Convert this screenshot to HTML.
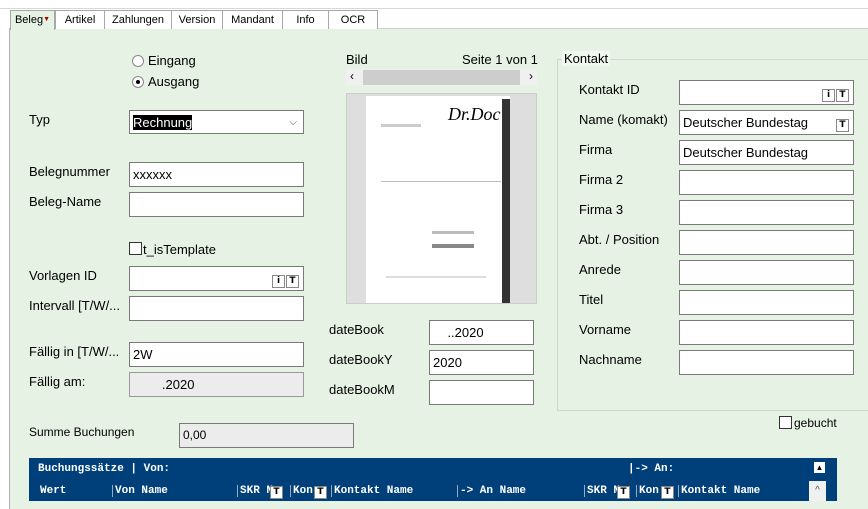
<!DOCTYPE html>
<html><head><meta charset="utf-8"><style>
body{margin:0;width:868px;height:501px;overflow:hidden;background:#fff;font-family:"Liberation Sans",sans-serif;font-size:13px;color:#000;position:relative}
.a{position:absolute}
.panel{position:absolute;left:9px;top:28px;width:870px;height:480px;background:#e6f3e4;border-left:1px solid #b0b0b0;border-top:1px solid #d0d0d0}
.tab{position:absolute;top:10px;height:18px;border:1px solid #a8a8a8;border-bottom:none;background:#fff;font-size:11px;text-align:center;line-height:18px}
.in{position:absolute;background:#fff;border:1px solid #7a7a7a;box-sizing:border-box;height:25px;padding-left:3px;line-height:23px;font-size:13px}
.lb{position:absolute;font-size:13px}
.btn{position:absolute;width:11px;height:11px;border:1px solid #888;background:#fff;font-size:9px;font-weight:bold;line-height:11px;text-align:center;font-family:"DejaVu Sans",sans-serif}
.mono{font-family:"Liberation Mono",monospace;font-size:11px;color:#fff;font-weight:bold}
</style></head><body>
<div class="a" style="left:0;top:8px;width:868px;height:1px;background:#d8d8d8"></div>
<div class="panel"></div>
<div class="tab" style="left:10px;width:43px;background:#e6f3e4;height:19px">Beleg<span style="color:#a00;font-size:7px;vertical-align:top">▼</span></div>
<div class="tab" style="left:55px;width:48px">Artikel</div>
<div class="tab" style="left:104px;width:66px">Zahlungen</div>
<div class="tab" style="left:171px;width:50px">Version</div>
<div class="tab" style="left:222px;width:59px">Mandant</div>
<div class="tab" style="left:282px;width:45px">Info</div>
<div class="tab" style="left:328px;width:48px">OCR</div>

<div class="a" style="left:132px;top:55px;width:10px;height:10px;border-radius:50%;border:1px solid #888;background:#fff"></div>
<div class="lb" style="left:148px;top:53px">Eingang</div>
<div class="a" style="left:132px;top:76px;width:10px;height:10px;border-radius:50%;border:1px solid #888;background:#fff"><div class="a" style="left:3px;top:3px;width:4px;height:4px;border-radius:50%;background:#000"></div></div>
<div class="lb" style="left:148px;top:74px">Ausgang</div>

<div class="lb" style="left:29px;top:112px">Typ</div>
<div class="in" style="left:129px;top:110px;width:175px;height:24px"><span style="background:#000;color:#fff">Rechnung</span><span class="a" style="right:6px;top:0;font-size:10px;color:#444">⌵</span></div>
<div class="lb" style="left:29px;top:164px">Belegnummer</div>
<div class="in" style="left:129px;top:162px;width:175px">xxxxxx</div>
<div class="lb" style="left:29px;top:194px">Beleg-Name</div>
<div class="in" style="left:129px;top:192px;width:175px"></div>
<div class="a" style="left:129px;top:242px;width:11px;height:11px;border:1px solid #333;background:#fff"></div>
<div class="lb" style="left:143px;top:242px">t_isTemplate</div>
<div class="lb" style="left:29px;top:268px">Vorlagen ID</div>
<div class="in" style="left:129px;top:266px;width:175px"><div class="btn" style="left:142px;top:8px">i</div><div class="btn" style="left:156px;top:8px">T</div></div>
<div class="lb" style="left:29px;top:298px">Intervall [T/W/...</div>
<div class="in" style="left:129px;top:296px;width:175px"></div>
<div class="lb" style="left:29px;top:344px">Fällig in [T/W/...</div>
<div class="in" style="left:129px;top:342px;width:175px">2W</div>
<div class="lb" style="left:29px;top:374px">Fällig am:</div>
<div class="in" style="left:129px;top:372px;width:175px;background:#ececec;border-color:#999">&nbsp; &nbsp; &nbsp; &nbsp; .2020</div>

<div class="lb" style="left:346px;top:52px">Bild</div>
<div class="lb" style="left:462px;top:52px">Seite 1 von 1</div>
<div class="a" style="left:346px;top:69px;width:191px;height:17px;background:#f0f0f0"><div class="a" style="left:17px;top:1px;width:157px;height:15px;background:#cdcdcd"></div><span class="a" style="left:4px;top:0;font-size:12px">‹</span><span class="a" style="right:4px;top:0;font-size:12px">›</span></div>
<div class="a" style="left:346px;top:93px;width:191px;height:211px;background:#dedede;border:1px solid #ccc;box-sizing:border-box">
<div class="a" style="left:19px;top:2px;width:144px;height:207px;background:#fff">
<div class="a" style="left:82px;top:8px;font-family:'Liberation Serif',serif;font-style:italic;font-size:18px">Dr.Doc</div>
<div class="a" style="left:136px;top:3px;width:8px;height:204px;background:#333"></div>
<div class="a" style="left:15px;top:28px;width:40px;height:3px;background:#ccc"></div>
<div class="a" style="left:15px;top:85px;width:120px;height:1px;background:#bbb"></div>
<div class="a" style="left:66px;top:135px;width:42px;height:3px;background:#bbb"></div>
<div class="a" style="left:66px;top:148px;width:42px;height:4px;background:#888"></div>
<div class="a" style="left:20px;top:180px;width:100px;height:2px;background:#ddd"></div>
</div></div>

<div class="lb" style="left:329px;top:322px">dateBook</div>
<div class="in" style="left:429px;top:320px;width:105px">&nbsp; &nbsp; ..2020</div>
<div class="lb" style="left:329px;top:352px">dateBookY</div>
<div class="in" style="left:429px;top:350px;width:105px">2020</div>
<div class="lb" style="left:329px;top:382px">dateBookM</div>
<div class="in" style="left:429px;top:380px;width:105px"></div>

<div class="a" style="left:557px;top:59px;width:320px;height:352px;border:1px solid #cfd8cf;box-sizing:border-box"></div>
<div class="lb" style="left:562px;top:51px;background:#f0f8ef;padding:0 2px">Kontakt</div>
<div class="lb" style="left:579px;top:82px">Kontakt ID</div>
<div class="in" style="left:679px;top:80px;width:175px"><div class="btn" style="left:142px;top:8px">i</div><div class="btn" style="left:156px;top:8px">T</div></div>
<div class="lb" style="left:579px;top:112px">Name (komakt)</div>
<div class="in" style="left:679px;top:110px;width:175px">Deutscher Bundestag<div class="btn" style="left:156px;top:8px">T</div></div>
<div class="lb" style="left:579px;top:142px">Firma</div>
<div class="in" style="left:679px;top:140px;width:175px">Deutscher Bundestag</div>
<div class="lb" style="left:579px;top:172px">Firma 2</div><div class="in" style="left:679px;top:170px;width:175px"></div>
<div class="lb" style="left:579px;top:202px">Firma 3</div><div class="in" style="left:679px;top:200px;width:175px"></div>
<div class="lb" style="left:579px;top:232px">Abt. / Position</div><div class="in" style="left:679px;top:230px;width:175px"></div>
<div class="lb" style="left:579px;top:262px">Anrede</div><div class="in" style="left:679px;top:260px;width:175px"></div>
<div class="lb" style="left:579px;top:292px">Titel</div><div class="in" style="left:679px;top:290px;width:175px"></div>
<div class="lb" style="left:579px;top:322px">Vorname</div><div class="in" style="left:679px;top:320px;width:175px"></div>
<div class="lb" style="left:579px;top:352px">Nachname</div><div class="in" style="left:679px;top:350px;width:175px"></div>

<div class="a" style="left:779px;top:416px;width:11px;height:11px;border:1px solid #333;background:#fff"></div>
<div class="lb" style="left:794px;top:416px;font-size:12px">gebucht</div>
<div class="lb" style="left:29px;top:425px;font-size:12px">Summe Buchungen</div>
<div class="in" style="left:179px;top:423px;width:175px;background:#ececec;font-size:12px">0,00</div>

<div class="a" style="left:29px;top:458px;width:808px;height:43px;background:#00407a"></div>
<div class="a mono" style="left:38px;top:463px">Buchungssätze | Von:</div>
<div class="a mono" style="left:628px;top:463px">|-> An:</div>
<div class="a" style="left:814px;top:462px;width:11px;height:11px;background:#fff;font-size:8px;text-align:center;line-height:11px">▲</div>
<div class="a mono" style="left:40px;top:485px">Wert</div>
<div class="a mono" style="left:112px;top:485px;border-left:1px solid #9ab;padding-left:2px">Von Name</div>
<div class="a mono" style="left:237px;top:485px;border-left:1px solid #9ab;padding-left:2px">SKR N</div>
<div class="a mono" style="left:290px;top:485px;border-left:1px solid #9ab;padding-left:2px">Kon</div>
<div class="a mono" style="left:331px;top:485px;border-left:1px solid #9ab;padding-left:2px">Kontakt Name</div>
<div class="a mono" style="left:457px;top:485px;border-left:1px solid #9ab;padding-left:2px">-> An Name</div>
<div class="a mono" style="left:584px;top:485px;border-left:1px solid #9ab;padding-left:2px">SKR N</div>
<div class="a mono" style="left:636px;top:485px;border-left:1px solid #9ab;padding-left:2px">Kon</div>
<div class="a mono" style="left:678px;top:485px;border-left:1px solid #9ab;padding-left:2px">Kontakt Name</div>
<div class="btn" style="left:270px;top:486px;background:#fff;color:#000">T</div>
<div class="btn" style="left:314px;top:486px">T</div>
<div class="btn" style="left:617px;top:486px">T</div>
<div class="btn" style="left:661px;top:486px">T</div>
<div class="a" style="left:809px;top:481px;width:17px;height:20px;background:#f0f0f0;font-size:10px;text-align:center;line-height:20px;color:#555">^</div>
</body></html>
